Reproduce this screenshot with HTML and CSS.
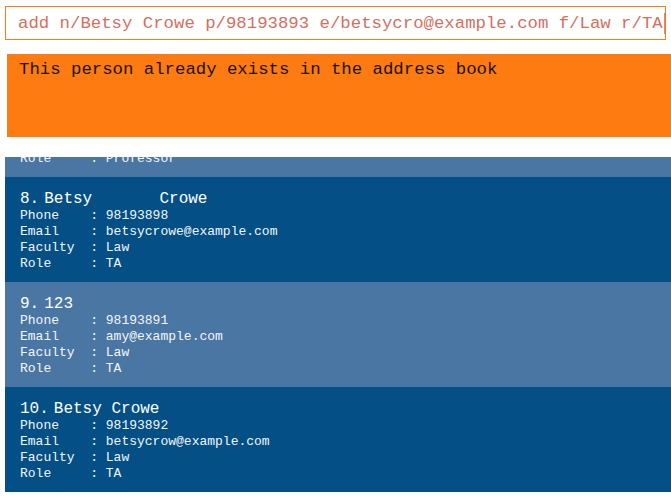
FILE: index.html
```html
<!DOCTYPE html>
<html>
<head>
<meta charset="utf-8">
<link rel="stylesheet" href="styles.css">
</head>
<body>
<div class="command"><span class="command-text">add n/Betsy Crowe p/98193893 e/betsycro@example.com f/Law r/TA</span><span class="caret"></span></div>
<div class="result">This person already exists in the address book</div>
<div class="list-viewport">
  <div class="list">
    <div class="card light scrolled">
      <div class="name-row"><span class="id">7.</span><span class="name">Alex Yeoh</span></div>
      <div class="field">Phone    : 87438807</div>
      <div class="field">Email    : alexyeoh@example.com</div>
      <div class="field">Faculty  : Computing</div>
      <div class="field">Role     : Professor</div>
    </div>
    <div class="card dark">
      <div class="name-row"><span class="id">8.</span><span class="name">Betsy       Crowe</span></div>
      <div class="field">Phone    : 98193898</div>
      <div class="field">Email    : betsycrowe@example.com</div>
      <div class="field">Faculty  : Law</div>
      <div class="field">Role     : TA</div>
    </div>
    <div class="card light">
      <div class="name-row"><span class="id">9.</span><span class="name">123</span></div>
      <div class="field">Phone    : 98193891</div>
      <div class="field">Email    : amy@example.com</div>
      <div class="field">Faculty  : Law</div>
      <div class="field">Role     : TA</div>
    </div>
    <div class="card dark">
      <div class="name-row"><span class="id">10.</span><span class="name">Betsy Crowe</span></div>
      <div class="field">Phone    : 98193892</div>
      <div class="field">Email    : betsycrow@example.com</div>
      <div class="field">Faculty  : Law</div>
      <div class="field">Role     : TA</div>
    </div>
  </div>
</div>
</body>
</html>
```
FILE: styles.css
```css
html, body {
  margin: 0;
  padding: 0;
  background: #ffffff;
}

body {
  font-family: "Courier New", "Nimbus Mono PS", "FreeMono", "Courier 10 Pitch", "Liberation Mono", monospace;
  width: 671px;
  height: 498px;
  overflow: hidden;
}

.command {
  box-sizing: border-box;
  margin: 6px 5px 0 5px;
  height: 34px;
  border: 1px solid #fb7c12;
  padding: 1px 0 0 12px;
  font-size: 17.33px;
  line-height: 31px;
  color: #d3705f;
  white-space: pre;
  display: flex;
  align-items: center;
}

.caret {
  display: inline-block;
  width: 0;
  height: 21px;
  border-left: 1px solid #d48a80;
  margin-left: 1px;
}

.result {
  box-sizing: border-box;
  margin: 14px 0 0 7px;
  height: 83px;
  background: #fd7b11;
  padding: 6px 0 0 12px;
  font-size: 17.33px;
  line-height: 19px;
  color: #1a1208;
  white-space: pre;
}

.list-viewport {
  margin: 20px 0 0 5px;
  height: 335px;
  overflow: hidden;
}

.card {
  box-sizing: border-box;
  height: 105px;
  padding: 13px 0 0 15px;
  color: #ffffff;
}

.card.scrolled {
  margin-top: -85px;
}

.card.dark {
  background: #034f86;
}

.card.light {
  background: #4a76a4;
}

.name-row {
  display: flex;
  gap: 5px;
  font-size: 16px;
  line-height: 18px;
  white-space: pre;
}

.field {
  font-size: 13px;
  line-height: 16px;
  white-space: pre;
  color: #f4f6f9;
}
```
